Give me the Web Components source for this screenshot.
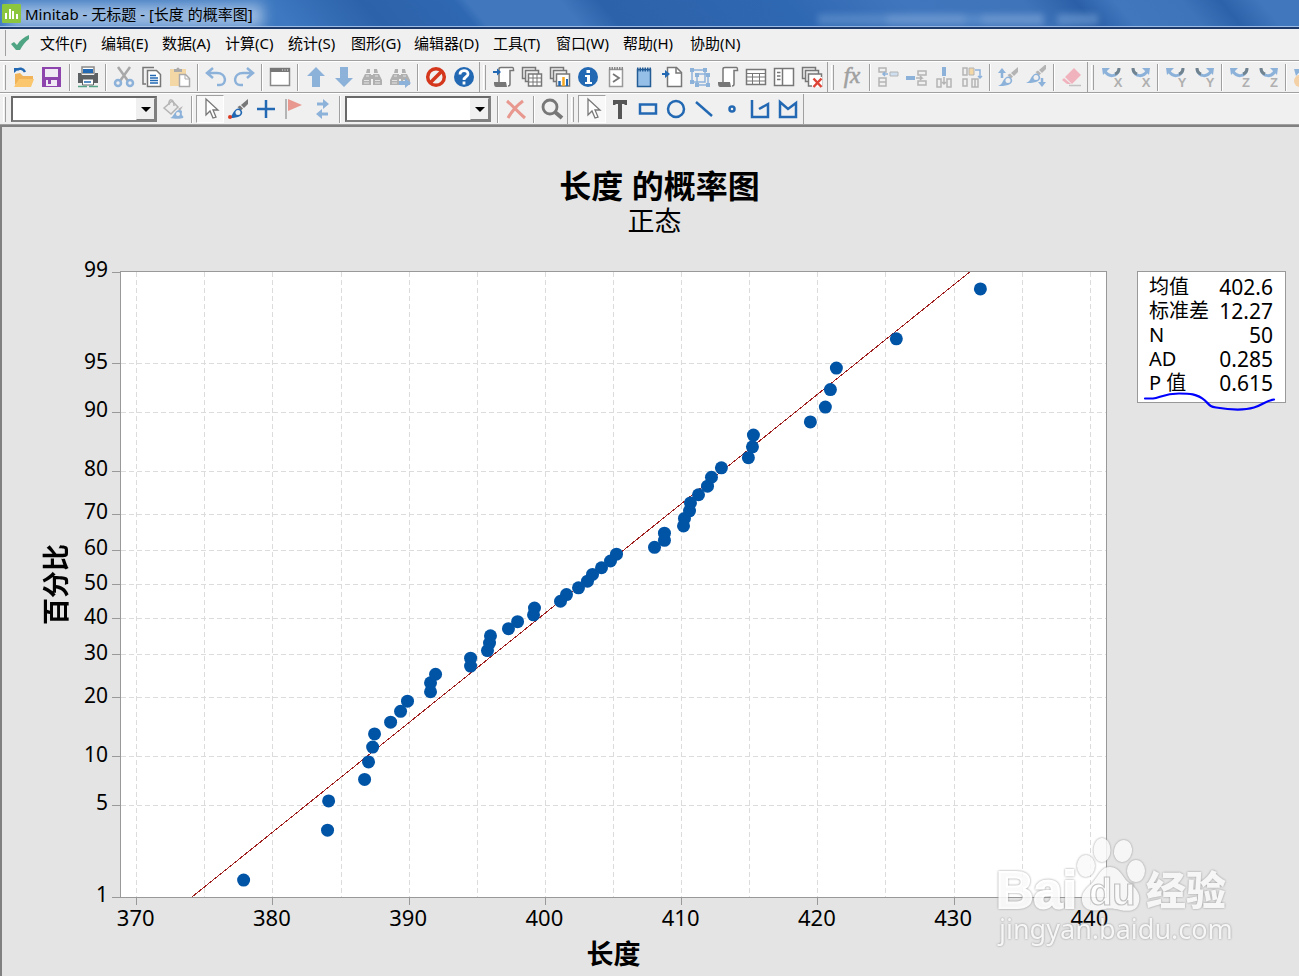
<!DOCTYPE html>
<html lang="zh-CN">
<head>
<meta charset="utf-8">
<title>Minitab</title>
<style>
html, body { margin: 0; height: 100%; }
body { font-family: "Noto Sans", "Noto Sans CJK SC", sans-serif; color: #000; background: #f0f0f0; overflow-x: hidden; }
</style>
</head>
<body>
<app-window></app-window>

<template id="t-window">
<style>
:host { display: flex; flex-direction: column; min-height: 100vh; overflow: hidden; }
chart-view { flex: 1; }
</style>
<title-bar>Minitab - 无标题 - [长度 的概率图]</title-bar>
<menu-bar></menu-bar>
<tool-row id="standard"></tool-row>
<tool-row id="drawing"></tool-row>
<chart-view></chart-view>
</template>

<template id="t-title">
<style>
:host { display: flex; align-items: center; gap: 4px; height: 27px; padding-left: 2px; position: relative; overflow: hidden;
  border-bottom: 2px solid #1d3a6b; box-shadow: inset 0 -1px #9dbce6; font-size: 15px;
  background: linear-gradient(50deg, #3d78c0 0, #3d78c0 22%, #2c62a9 29%, #2f68b2 36%, #4077bd 37%, #4077bd 44%, #2c62a9 47%, #2f68b2 61%, #4076bd 70%, #3f74ba 79%, #2b60a8 83%, #4077bd 86%, #3d74ba 91%, #2c62a9 94%, #4077bd 97%); }
svg { width: 19px; height: 19px; flex: none; position: relative; }
h1 { font: inherit; margin: 0; position: relative; line-height: 22px; white-space: nowrap; }
.glow { position: absolute; left: 8px; top: 4px; width: 255px; height: 24px; background: #b4cdea; opacity: .8; filter: blur(7px); }
.ghost { position: absolute; left: 63%; top: 14px; width: 280px; height: 11px; filter: blur(3px); opacity: .5;
  background: linear-gradient(90deg, #6c9bd3 0 24%, #8bb0de 25% 52%, #6c9bd3 53% 58%, #8bb0de 59% 80%, transparent 81% 85%, #7ea8da 86%); }
</style>
<span class="glow"></span><span class="ghost"></span>
<svg viewBox="0 0 19 19"><rect width="19" height="19" rx="1" fill="#8cc63e"/><path d="M3 9h2v6H3zM7 5h2v10H7zM10 7h2v8h-2zM14 10h2v5h-2z" fill="#fff"/></svg>
<h1><slot></slot></h1>
</template>

<template id="t-menu">
<style>
:host { display: block; background: #f0f0f0; border-bottom: 1px solid #a0a0a0; }
nav { display: flex; align-items: center; height: 31px; box-sizing: border-box; padding-bottom: 3px; }
.grip { width: 1px; height: 26px; background: #a0a0a0; margin: 0 4px 0 5px; }
svg { width: 20px; height: 20px; margin-right: 4px; }
button { font: inherit; font-size: 15px; line-height: 24px; border: 0; background: none; color: #000; padding: 0 6px; white-space: nowrap; flex: none; width: 63px; text-align: left; }
button.s { width: 61px; }
button.l { width: 79px; }
button.m { width: 67px; }
</style>
<nav>
<span class="grip"></span>
<svg viewBox="0 0 20 20"><path d="M1 11l3-2 3 3c3-5 7-8 12-10v4c-4 3-6 6-9 11H6z" fill="#4fa583"/></svg>
<button class="s">文件(F)</button><button class="s">编辑(E)</button><button>数据(A)</button><button>计算(C)</button><button>统计(S)</button><button>图形(G)</button><button class="l">编辑器(D)</button><button>工具(T)</button><button class="m">窗口(W)</button><button class="m">帮助(H)</button><button>协助(N)</button>
</nav>
</template>

<template id="t-row">
<style>
:host { display: flex; align-items: center; height: 30px; flex: none; background: #f0f0f0; border-top: 1px solid #fff; border-bottom: 1px solid #a0a0a0; }
.sep { flex: none; width: 8px; height: 27px; background: linear-gradient(90deg, transparent 3px, #a0a0a0 3px 4px, #fff 4px 5px, transparent 5px); }
.grip { flex: none; width: 12px; height: 30px; background: linear-gradient(#a0a0a0, #a0a0a0) 7px 3px / 1px 25px no-repeat, linear-gradient(#fff, #fff) 5px 3px / 1px 25px no-repeat, linear-gradient(#a0a0a0, #a0a0a0) 1px 0 / 1px 30px no-repeat; }
.start { width: 10px; background: linear-gradient(#a0a0a0, #a0a0a0) 5px 3px / 1px 25px no-repeat, linear-gradient(#fff, #fff) 3px 3px / 1px 25px no-repeat; }
.end { width: 1px; height: 30px; margin-left: 1px; background: #a0a0a0; }
tool-button, combo-box { flex: none; }
</style>
</template>

<template id="t-button">
<style>
:host { display: block; width: 28px; height: 28px; }
button { display: flex; align-items: center; justify-content: center; width: 28px; height: 28px; padding: 0; border: 1px solid transparent; background: none; }
:host([pressed]) button { background: #f8f8f8; border-color: #a0a0a0 #fff #fff #a0a0a0; }
svg { width: 24px; height: 24px; flex: none; }
</style>
<button type="button"><svg viewBox="0 0 24 24" fill="none"></svg></button>
</template>

<template id="t-combo">
<style>
:host { display: block; position: relative; width: 146px; height: 26px; margin: 0 3px 0 1px; }
select { appearance: none; width: 100%; height: 100%; box-sizing: border-box; border: 2px solid; border-color: #696969 #808080 #808080 #696969; border-radius: 0; background: #fff; }
span { position: absolute; right: 2px; top: 2px; width: 17px; height: 20px; background: #f0f0f0; border: 1px solid; border-color: #f0f0f0 #808080 #808080 #f0f0f0; pointer-events: none; }
span::after { content: ""; position: absolute; left: 4px; top: 8px; border: 5px solid transparent; border-top-color: #000; border-bottom: 0; }
</style>
<select><option></option></select><span></span>
</template>

<template id="t-chart">
<style>
:host { display: grid; grid-template: 144px minmax(400px, 1fr) 78px / 118px minmax(0, 1fr) 192px; position: relative; background: #e4e4e4; border: solid #808080; border-width: 2px 0 0 2px; }
header { grid-column: 1 / -1; text-align: center; padding: 41px 0 0; }
h2 { margin: 0; padding-left: 18px; font-size: 32px; line-height: 36px; font-weight: 700; }
h3 { margin: 0; padding-left: 8px; font-size: 27px; line-height: 34px; font-weight: 400; }
.y { grid-column: 1; display: flex; align-items: center; padding-left: 34px; font-weight: 700; font-size: 27px; line-height: 40px; }
.y span { writing-mode: vertical-rl; text-orientation: sideways; transform: rotate(180deg); }
.x { grid-column: 2; text-align: center; font-weight: 700; font-size: 27px; line-height: 36px; padding-top: 38px; }
stats-box { margin-left: 30px; justify-self: start; align-self: start; }
site-mark { position: absolute; right: 70px; bottom: 25px; }
</style>
<header><h2>长度 的概率图</h2><h3>正态</h3></header>
<div class="y"><span>百分比</span></div>
<probability-plot></probability-plot>
<stats-box></stats-box>
<div class="x">长度</div>
<site-mark></site-mark>
</template>

<template id="t-plot">
<style>
:host { display: block; position: relative; border: 1px solid #999; background: #fff; }
svg { position: absolute; inset: 0; width: 100%; height: 100%; overflow: visible; }
.grid { stroke: #dcdcdc; stroke-dasharray: 5 3; shape-rendering: crispEdges; }
.tick { stroke: #999; shape-rendering: crispEdges; }
.fit { stroke: #a02020; shape-rendering: crispEdges; }
.dot { fill: #0054a6; }
.yt { font-size: 21px; text-anchor: end; }
.xt { font-size: 22px; text-anchor: middle; }
</style>
<svg></svg>
</template>

<template id="t-stats">
<style>
:host { display: block; position: relative; width: 147px; height: 130px; border: 1px solid #999; background: #fff; }
table { border-collapse: collapse; width: 100%; margin-top: 3px; }
th, td { padding: 0; height: 24px; line-height: 24px; font-weight: 400; white-space: nowrap; }
th { text-align: left; font-size: 20px; padding-left: 11px; }
td { text-align: right; font-size: 21px; padding-right: 12px; }
svg { position: absolute; left: 0; top: 116px; width: 147px; height: 28px; overflow: visible; }
</style>
<table>
<tr><th scope="row">均值</th><td>402.6</td></tr>
<tr><th scope="row">标准差</th><td>12.27</td></tr>
<tr><th scope="row">N</th><td>50</td></tr>
<tr><th scope="row">AD</th><td>0.285</td></tr>
<tr><th scope="row">P 值</th><td>0.615</td></tr>
</table>
<svg viewBox="0 0 147 28"><path d="M7 10.500h8c7-1 12-5 26-5 10 0 18 0 26 7 5 5 5 6 11 7 12 2 28 3 38 0 8-2 12-7 20-8" fill="none" stroke="#00f" stroke-width="2.200" stroke-linecap="round"/></svg>
</template>

<template id="t-mark">
<style>
:host { display: block; width: 232px; height: 114px; opacity: .85; pointer-events: none; }
svg { display: block; overflow: visible; filter: drop-shadow(0 0 1px #888); }
.b { font: 700 52px "Liberation Sans", sans-serif; stroke: #fff; stroke-width: 2; }
.d { font: 700 38px "Liberation Sans", sans-serif; fill: #fff; stroke: #bbb; stroke-width: 1.200; }
.c { font: 900 40px "Noto Sans CJK SC", sans-serif; }
.u { font: 400 27px "Noto Sans", sans-serif; }
</style>
<svg width="232" height="114" viewBox="0 0 232 114" fill="#fafafa">
<text class="b" x="-1" y="71">Bai</text>
<ellipse cx="89" cy="29" rx="9" ry="11"/><ellipse cx="105" cy="13" rx="8.500" ry="12"/><ellipse cx="126" cy="14" rx="9" ry="11" transform="rotate(12 126 14)"/><ellipse cx="139" cy="34" rx="9" ry="11"/>
<path d="M113 30c10 0 12 10 18 15 8 6 13 12 11 20-2 9-10 10-19 8-7-2-13-2-20 0-9 2-17-1-18-9-1-9 5-13 11-19 6-7 8-15 17-15z"/>
<text class="d" x="92" y="68">du</text>
<text class="c" x="149" y="68">经验</text>
<text class="u" x="2" y="102">jingyan.baidu.com</text>
</svg>
</template>

<script>
const G = '#777', B = '#2268b2', LB = '#8db2da', LG = '#b4b4b4';
const brush = (a, b) => `<path d="M22 2v5l-4 4-3-3z" fill="${b}"/><path d="M14 8.500l3 3-2 2-3.500-3.500z" fill="${b}"/><path d="M2 21c3-1 4-3 5-5 2-4 6-6 8-3 3 3 0 6-3 7-3 1-7 1-10 1z" fill="${a}"/><circle cx="12" cy="15.500" r="2.500" fill="#f0f0f0"/>`;
const pointer = '<path d="M8 2v16l4-4 3 7 3-1-3-7h5z" fill="#fff" stroke="#777" stroke-width="1.300"/>';
const binoc = '<path d="M7 4h3v4H6zM14 4h3l1 4h-4zM5 9h6v11H2v-5zM13 9h6l3 6v5h-9z" fill="#b0b0b0"/><path d="M10 10h4v4h-4z" fill="#b0b0b0"/><path d="M4 15.500h5M15 15.500h5M6 11h3M15 11h3M4 18h5M15 18h5" stroke="#e4e4e4"/>';
const stack = '<path d="M2.500 2.500h13v11h-13z" fill="#eee" stroke="#777" stroke-width="1.500"/><path d="M5.500 5.500h13v11h-13z" fill="#eee" stroke="#777" stroke-width="1.500"/><path d="M8.500 9h13v12h-13z" fill="#fff" stroke="#777" stroke-width="1.500"/>';
const scroll = '<path d="M7 17V4c0-1 1-1.500 2-1.500h11.500c1 0 1 3 1 3H18V19c0 2-1 2-2 2" fill="#fff" stroke="#777" stroke-width="1.500"/><path d="M2 17h12l1 5H4c-2 0-2-3-2-5z" fill="#777"/>';
const turn = (letter, flip) => `<g${flip ? ' transform="matrix(-1 0 0 1 24 0)"' : ''}><path d="M5 6c3 6 12 7 14-2" stroke="${LB}" stroke-width="3"/><path d="M15 9c3-1 4-3 4-6" stroke="#71838f" stroke-width="3"/><path d="M2 3h8l-7 7z" fill="${LB}"/></g><text x="18" y="22" font-family="Liberation Sans" font-weight="700" font-size="13" text-anchor="middle" fill="#b0b0b0">${letter}</text>`;
const ICONS = {
  open: '<path d="M3 20V9l5-1 3 3h10v4H8z" fill="#f0b357"/><path d="M7 14h15l-3 8H2z" fill="#fac66e"/><path d="M2 3h6L2 8z" fill="#2268b2"/><path d="M5 5c2-2 6-2 8 2" stroke="#2268b2" stroke-width="2.500"/>',
  save: '<path d="M2 2h19v20H2z" fill="#8e44ad"/><path d="M5 4h13v8H5z" fill="#f0eaf4"/><path d="M6 15h11v6H6z" fill="#f0eaf4"/><path d="M8 15h3v4H8z" fill="#8e44ad"/>',
  print: '<path d="M6 2h12v6H6z" fill="#fff" stroke="#888" stroke-width="1.500"/><path d="M2 8h3l1 2h12l1-2h3v10H2z" fill="#5d6163"/><path d="M7 4h10v4H7z" fill="#2268b2"/><path d="M6.500 14h11v6h-11z" fill="#fff" stroke="#5d6163"/><path d="M8 17h7" stroke="#2268b2" stroke-width="1.500"/><path d="M2 21.500h9M13 21.500h9" stroke="#55a387" stroke-width="1.500"/>',
  cut: '<path d="M6 2l10 14M18 2L8 16" stroke="#a8a8a8" stroke-width="2.500"/><circle cx="6" cy="18" r="3" stroke="#8db2da" stroke-width="2.500"/><circle cx="18" cy="18" r="3" stroke="#8db2da" stroke-width="2.500"/>',
  copy: '<path d="M6 19H3V2.500h11" stroke="#777" stroke-width="1.500"/><path d="M7.500 5.500h9l4 4v12h-13z" fill="#fff" stroke="#777" stroke-width="1.500"/><path d="M10 10.500h6M10 13h8M10 15.500h8M10 18h8" stroke="#2268b2" stroke-width="1.300"/>',
  paste: '<path d="M2 4h16v17H2z" fill="#f3d7a5"/><path d="M6 7V4h2.500a1.500 1.500 0 0 1 3 0H14v3z" fill="#aaa"/><path d="M11.500 9.500h6l4 4v8h-10z" fill="#fff" stroke="#aaa" stroke-width="1.500"/><path d="M17 10v4h4" stroke="#aaa"/>',
  undo: '<path d="M9 3L3 8l6 5M3 8h10c10 0 10 12 3 12h-3" stroke="#8db2da" stroke-width="2.500"/>',
  redo: '<path d="M15 3l6 5-6 5M21 8H11C1 8 1 20 8 20h3" stroke="#8db2da" stroke-width="2.500"/>',
  window: '<path d="M2.500 3.500h19v17h-19z" fill="#fff" stroke="#888" stroke-width="1.500"/><path d="M2 3h20v4H2z" fill="#777"/><path d="M14 5h1M16.500 5h1M19 5h1" stroke="#eee"/>',
  up: '<path d="M12 2l9 9h-5v11H8V11H3z" fill="#8db2da"/>',
  down: '<path d="M12 22l9-9h-5V2H8v11H3z" fill="#8db2da"/>',
  find: binoc, findnext: binoc + '<path d="M11 16h6v-3l6 5-6 5v-3h-6z" fill="#8db2da"/>',
  stop: '<circle cx="12" cy="12" r="8.300" stroke="#d4371c" stroke-width="3.500"/><path d="M6 18L18 6" stroke="#d4371c" stroke-width="3.500"/>',
  help: '<circle cx="12" cy="12" r="10" fill="#2268b2"/><path d="M8 9.500c0-5 8-5 8-.5 0 3-4 2.500-4 6M12 16.500v3" stroke="#fff" stroke-width="2.800"/>',
  newsession: scroll + '<path d="M1 7h7" stroke="#2268b2" stroke-width="2"/><path d="M5 3.500v7l4-3.500z" fill="#2268b2"/>',
  sheets: stack + '<path d="M9 13h12M9 17h12M13 9v12M17 9v12" stroke="#777"/>',
  graphs: stack + '<path d="M11.500 21v-5" stroke="#2268b2" stroke-width="2.500"/><path d="M15.500 21V12" stroke="#f5a623" stroke-width="2.500"/><path d="M19 21v-7" stroke="#2268b2" stroke-width="2"/>',
  info: '<circle cx="12" cy="12" r="10" fill="#2268b2"/><path d="M10.500 5h3.500v3h-3.500zM9 10h5v7h2v2H9v-2h2v-5H9z" fill="#fff"/>',
  session: '<path d="M5.500 4.500h13v17h-13z" fill="#fff" stroke="#999" stroke-width="1.500"/><path d="M5 3.500h14" stroke="#888" stroke-width="3" stroke-dasharray="1.500 1"/><path d="M9 9l6 4-6 4" stroke="#777" stroke-width="1.800"/>',
  notepad: '<path d="M5.500 4.500h13v17h-13z" fill="#96bfe7" stroke="#245d95" stroke-width="1.500"/><path d="M5 4.500h14" stroke="#245d95" stroke-width="4" stroke-dasharray="1.500 1"/>',
  import: '<path d="M7.500 2.500h9l5 5v14h-14z" fill="#fff" stroke="#777" stroke-width="1.500"/><path d="M16 3v5h5" stroke="#777" stroke-width="1.500"/><path d="M2 9h6" stroke="#2268b2" stroke-width="2"/><path d="M5 5v8l5-4z" fill="#2268b2"/>',
  link: '<path d="M4 5h13v12H4zM9 9h11v11H9z" stroke="#8db2da" stroke-width="1.500"/><path d="M2 3h4v4H2zM15 3h4v4h-4zM2 15h4v4H2zM7 8h4v4H7zM18 8h4v4h-4zM7 18h4v4H7zM18 18h4v4h-4z" fill="#8db2da"/>',
  history: scroll,
  table: '<path d="M2.500 4.500h19v15h-19z" fill="#fff" stroke="#777" stroke-width="1.500"/><path d="M2 8.500h20M2 12h20M2 16h20M8.500 8v12M15.500 8v12" stroke="#777"/>',
  panel: '<path d="M2.500 3.500h19v17h-19z" fill="#fff" stroke="#777" stroke-width="1.500"/><path d="M10.500 4v16" stroke="#777" stroke-width="1.500"/><path d="M5 7.500h3.500M5 11h3.500M5 14.500h3.500" stroke="#777" stroke-width="1.500"/>',
  closeall: stack + '<path d="M12 12h10v10H12z" fill="#fff"/><path d="M13.500 13.500l8 8.500M21.500 13.500l-8 8.500" stroke="#de4436" stroke-width="2.500"/>',
  fx: '<text x="12" y="18" font-family="Liberation Serif" font-style="italic" font-size="23" text-anchor="middle" fill="#a0a0a0" stroke="#a0a0a0" stroke-width=".6">fx</text>',
  i1: `<path d="M3 3h7v4H3zM3 13h7v8H3zM3 17h7" stroke="${LG}" stroke-width="1.500"/><path d="M14 7h8v4h-8z" fill="#cddff0" stroke="${LG}"/><path d="M12 9H7M9 7L7 9l2 2" stroke="${LB}" stroke-width="1.500"/>`,
  i2: `<path d="M2 11h9v4H2z" fill="${LB}"/><path d="M14 6h8v4h-8zM14 16h8v4h-8z" stroke="${LG}" stroke-width="1.500"/><path d="M12 13h6l-2-2M18 13l-2 2" stroke="${LG}" stroke-width="1.500"/>`,
  i3: `<path d="M10 2h4v9h-4z" fill="${LB}"/><path d="M5 14h4v8H5zM15 14h4v8h-4z" stroke="${LG}" stroke-width="1.500"/><path d="M12 12v7M10 17l2 2 2-2" stroke="${LG}" stroke-width="1.500"/>`,
  i4: `<path d="M9 3h5v7H9z" fill="#f3d7a5" stroke="${LG}"/><path d="M3 3h4v7H3zM3 14h4v7H3zM12 14h6v8h-6zM15 14v8" stroke="${LG}" stroke-width="1.500"/><path d="M15 5h5v8M18 11l2 2 2-2" stroke="${LB}" stroke-width="1.500"/>`,
  brushup: brush(LB, LG) + `<path d="M6 13V7" stroke="${LB}" stroke-width="2.500"/><path d="M2 8l4-5 4 5z" fill="${LB}"/>`,
  brushdown: `<g transform="translate(0 -3)">${brush(LB, LG)}</g><path d="M18 13v6" stroke="${LB}" stroke-width="2.500"/><path d="M14 17h8l-4 5z" fill="${LB}"/>`,
  eraser: '<path d="M14 3l7 7-9 9-7-7z" fill="#f0b3bd"/><path d="M4 13l7 6H7l-5-4z" fill="#f0b3bd"/><path d="M9 20.500h12" stroke="#c2c2c2" stroke-width="1.500"/>',
  xl: turn('X'), xr: turn('X', 1), yl: turn('Y'), yr: turn('Y', 1), zl: turn('Z'), zr: turn('Z', 1),
  hand: '<path d="M2 4h8l-6 7z" fill="#8db2da"/><circle cx="8" cy="16" r="6" fill="#f3d0a5"/>',
  fill: '<path d="M2 11l8-7 6 6-7 7z" fill="#eee" stroke="#b4b4b4" stroke-width="1.500"/><path d="M7 8c-1-7 5-7 5 1" stroke="#b4b4b4" stroke-width="1.500"/><path d="M16 12l5-3-3 5z" fill="#b4b4b4"/><path d="M8 21c4-1 4-7 9-8 5 0 2 3 3 5s2 1 1 3c-2 1-9 1-13 0z" fill="#8db2da"/><circle cx="16" cy="17" r="2" fill="#f0f0f0"/>',
  pointer, brush: brush(B, G) + '<circle cx="4" cy="20" r="2" fill="#de3b24"/>',
  plus: '<path d="M12 3v18M3 12h18" stroke="#2268b2" stroke-width="2.500"/>',
  flag: '<path d="M4 2v20" stroke="#b4b4b4" stroke-width="2"/><path d="M6 2l14 6-14 6z" fill="#e8988f"/>',
  swap: '<path d="M7 7h7M18 17h-7" stroke="#8db2da" stroke-width="3"/><path d="M13 2v10l6-5zM12 12v10l-6-5z" fill="#8db2da"/>',
  delete: '<path d="M3 4c5 4 12 12 18 17M19 4C12 9 8 14 4 21" stroke="#e8988f" stroke-width="3"/>',
  zoom: '<circle cx="10" cy="10" r="7" stroke="#777" stroke-width="2.800"/><path d="M15 15l7 6" stroke="#777" stroke-width="4"/>',
  text: '<path d="M5 3h14v5h-2l-1-1h-2v15h-4V7H8L7 8H5z" fill="#555"/>',
  rect: '<path d="M4 7.500h16v9H4z" stroke="#2268b2" stroke-width="2.500"/>',
  circle: '<circle cx="12" cy="12" r="8" stroke="#2268b2" stroke-width="2.500"/>',
  line: '<path d="M4 5l16 14" stroke="#2268b2" stroke-width="2.500"/>',
  dot: '<circle cx="12" cy="12" r="2.500" stroke="#2268b2" stroke-width="2.500"/>',
  polyline: '<path d="M4 3v17h16V7l-9 5" stroke="#2268b2" stroke-width="2.500"/>',
  polygon: '<path d="M4 20V5l8 7 8-6v14z" stroke="#2268b2" stroke-width="2.500"/>'
};

/* "|" is a separator, "#" starts a new bar, "." ends the last one, "=" is a drop-down, "*" marks a pressed button */
const ROWS = {
  standard: 'open save | print | cut copy paste | undo redo | window | up down find findnext | stop help # newsession sheets graphs info session notepad import link history table panel closeall # fx | i1 i2 i3 i4 | brushup brushdown | eraser # xl xr | yl yr | zl zr | hand',
  drawing: '= fill | pointer* brush plus flag swap | = | delete | zoom # pointer* text rect circle line dot polyline polygon .'
};

class Base extends HTMLElement {
  constructor() {
    super();
    this.attachShadow({ mode: 'open' });
    this.shadowRoot.append(document.getElementById(this.constructor.tpl).content.cloneNode(true));
  }
}
const define = (name, tpl, cls = class extends Base {}) => { cls.tpl = tpl; customElements.define(name, cls); };

define('title-bar', 't-title');
define('menu-bar', 't-menu');
define('stats-box', 't-stats');
define('site-mark', 't-mark');
define('combo-box', 't-combo', class extends Base {
  connectedCallback() { this.shadowRoot.querySelector('select').setAttribute('aria-label', this.getAttribute('name')); }
});
define('tool-button', 't-button', class extends Base {
  connectedCallback() {
    const icon = this.getAttribute('icon');
    this.shadowRoot.querySelector('svg').innerHTML = ICONS[icon];
    this.shadowRoot.querySelector('button').setAttribute('aria-label', icon);
  }
});
define('tool-row', 't-row', class extends Base {
  connectedCallback() {
    const html = ROWS[this.id].split(' ').map(t =>
      t === '|' ? '<span class="sep"></span>' :
      t === '#' ? '<span class="grip"></span>' :
      t === '.' ? '<span class="end"></span>' :
      t === '=' ? '<combo-box name="item"></combo-box>' :
      `<tool-button icon="${t.replace('*', '')}"${t.endsWith('*') ? ' pressed' : ''}></tool-button>`).join('');
    this.shadowRoot.append(document.createRange().createContextualFragment('<span class="grip start"></span>' + html));
  }
});

const LENGTHS = [377.85, 384.01, 384.09, 386.73, 387.02, 387.32, 387.46, 388.64, 389.37, 389.88, 391.57, 391.57, 391.94, 394.51, 394.51, 395.75, 395.9, 395.97, 397.29, 397.96, 399.13, 399.2, 401.11, 401.55, 402.43, 403.09, 403.46, 404.12, 404.78, 405.22, 408.01, 408.74, 408.74, 410.14, 410.21, 410.58, 410.65, 411.24, 411.9, 412.19, 412.92, 414.9, 415.2, 415.27, 419.45, 420.55, 420.92, 421.36, 425.76, 431.93];
const MEAN = 402.6, SD = 12.27, X0 = 368.85, X1 = 441.15;

/* standard normal quantile by bisection on an erf approximation */
function cdf(z) {
  const x = Math.abs(z) / Math.SQRT2, t = 1 / (1 + 0.3275911 * x);
  const e = 1 - ((((1.061405429 * t - 1.453152027) * t + 1.421413741) * t - 0.284496736) * t + 0.254829592) * t * Math.exp(-x * x);
  return z < 0 ? (1 - e) / 2 : (1 + e) / 2;
}
function quantile(p) {
  let a = -4, b = 4;
  for (let i = 0; i < 40; i++) { const m = (a + b) / 2; cdf(m) < p ? a = m : b = m; }
  return (a + b) / 2;
}
const Z = quantile(0.99);
const px = v => (v - X0) / (X1 - X0) * 100 + '%';
const py = p => (Z - quantile(p)) / (2 * Z) * 100 + '%';

define('probability-plot', 't-plot', class extends Base {
  connectedCallback() {
    let s = '';
    for (let v = 370; v <= 440; v += 5) {
      s += `<line class="grid" x1="${px(v)}" x2="${px(v)}" y1="0" y2="100%"/>`;
      if (v % 10 === 0) s += `<svg x="${px(v)}" y="100%" overflow="visible"><line class="tick" y1="1" y2="8"/><text class="xt" x="-1" y="29">${v}</text></svg>`;
    }
    for (const p of [99, 95, 90, 80, 70, 60, 50, 40, 30, 20, 10, 5, 1]) {
      const y = py(p / 100);
      if (p !== 99 && p !== 1) s += `<line class="grid" x1="0" x2="100%" y1="${y}" y2="${y}"/>`;
      s += `<svg y="${y}" overflow="visible"><line class="tick" x1="-9" x2="-1"/><text class="yt" x="-13" y="5">${p}</text></svg>`;
    }
    s += `<line class="fit" x1="${px(MEAN - Z * SD)}" y1="100%" x2="${px(MEAN + Z * SD)}" y2="0"/>`;
    LENGTHS.forEach((v, i) => { s += `<circle class="dot" cx="${px(v)}" cy="${py((i + 0.7) / (LENGTHS.length + 0.4))}" r="6.500"/>`; });
    this.shadowRoot.querySelector('svg').innerHTML = s;
  }
});
define('chart-view', 't-chart');
define('app-window', 't-window');
</script>
</body>
</html>
